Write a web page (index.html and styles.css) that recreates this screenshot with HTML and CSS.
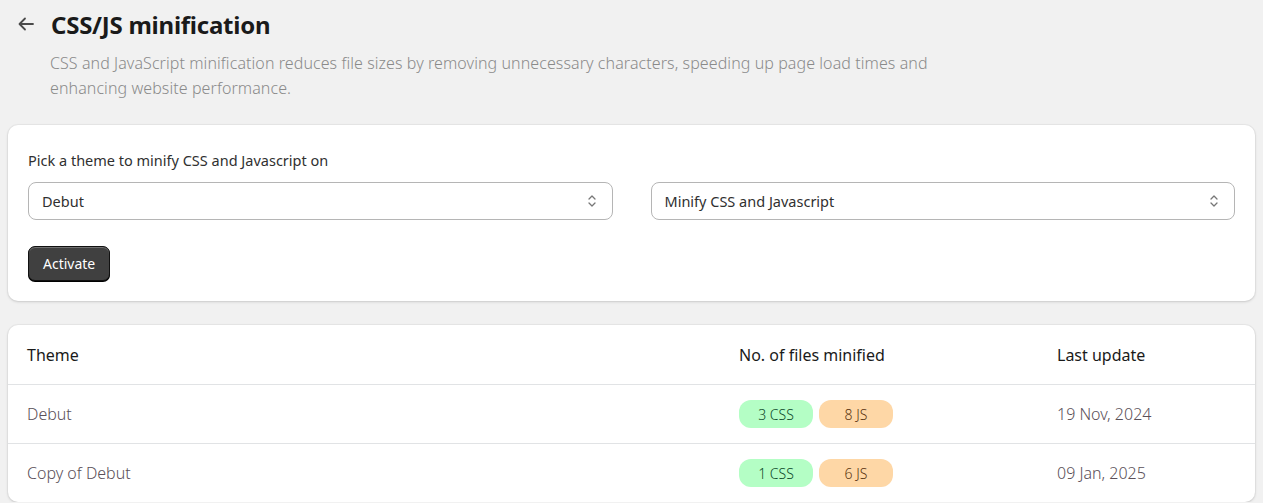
FILE: index.html
```html
<!DOCTYPE html>
<html lang="en">
<head>
<meta charset="utf-8">
<title>CSS/JS minification</title>
<link rel="stylesheet" href="styles.css">
</head>
<body>
<div class="page">
  <header class="page-header">
    <button class="back" aria-label="Back">
      <svg width="20" height="20" viewBox="0 0 20 20"><path d="M17 10H4M9 4.5L3.5 10 9 15.5" fill="none" stroke="#4a4a4a" stroke-width="1.8" stroke-linecap="round" stroke-linejoin="round"/></svg>
    </button>
    <h1 class="title">CSS/JS minification</h1>
  </header>
  <p class="desc">CSS and JavaScript minification reduces file sizes by removing unnecessary characters, speeding up page load times and enhancing website performance.</p>

  <section class="card form-card">
    <label class="field-label">Pick a theme to minify CSS and Javascript on</label>
    <div class="selects">
      <div class="select"><span>Debut</span><svg class="chev" width="12" height="16" viewBox="0 0 12 16"><path d="M3 6l3-3 3 3M3 10l3 3 3-3" fill="none" stroke="#777" stroke-width="1.3" stroke-linecap="round" stroke-linejoin="round"/></svg></div>
      <div class="select"><span>Minify CSS and Javascript</span><svg class="chev" width="12" height="16" viewBox="0 0 12 16"><path d="M3 6l3-3 3 3M3 10l3 3 3-3" fill="none" stroke="#777" stroke-width="1.3" stroke-linecap="round" stroke-linejoin="round"/></svg></div>
    </div>
    <button class="btn-primary">Activate</button>
  </section>

  <section class="card table-card">
    <div class="row head">
      <div class="c1">Theme</div>
      <div class="c2">No. of files minified</div>
      <div class="c3">Last update</div>
    </div>
    <div class="row">
      <div class="c1 name">Debut</div>
      <div class="c2 badges"><span class="badge css">3 CSS</span><span class="badge js">8 JS</span></div>
      <div class="c3 date">19 Nov, 2024</div>
    </div>
    <div class="row">
      <div class="c1 name">Copy of Debut</div>
      <div class="c2 badges"><span class="badge css">1 CSS</span><span class="badge js">6 JS</span></div>
      <div class="c3 date">09 Jan, 2025</div>
    </div>
  </section>
</div>
</body>
</html>
```
FILE: styles.css
```css
* { box-sizing: border-box; }
html, body { margin: 0; padding: 0; }
body {
  background: #f1f1f1;
  font-family: "Noto Sans", "Open Sans", sans-serif;
  color: #303030;
}
.page { padding: 8px 8px 0; }
.page-header {
  display: flex;
  align-items: center;
  gap: 14px;
  height: 32px;
}
.back {
  width: 22px; height: 22px;
  margin-left: 7px;
  padding: 0; border: 0; background: none;
  display: flex; align-items: center; justify-content: center;
}
.title {
  margin: 0;
  font-size: 24px;
  font-weight: 700;
  color: #1a1a1a;
  letter-spacing: -0.25px;
}
.desc {
  margin: 11px 0 0 42px;
  max-width: 900px;
  font-size: 16px;
  line-height: 25px;
  font-weight: 300;
  color: #8a8a8a;
  letter-spacing: 0.08px;
}
.card {
  background: #fff;
  border-radius: 10px;
  box-shadow: 0 1px 3px rgba(0,0,0,0.14), 0 0 0 1px rgba(0,0,0,0.03);
}
.form-card {
  margin-top: 24px;
  padding: 25px 20px 20px;
}
.field-label {
  display: block;
  font-size: 14.5px;
  line-height: 20px;
  color: #303030;
}
.selects {
  display: grid;
  grid-template-columns: 1fr 1fr;
  gap: 38px;
  margin-top: 12px;
}
.select {
  height: 38px;
  border: 1px solid #b5b5b5;
  border-radius: 8px;
  display: flex;
  align-items: center;
  justify-content: space-between;
  padding: 0 14px 0 13px;
  font-size: 14.5px;
  color: #303030;
}
.btn-primary {
  margin-top: 26px;
  height: 35px;
  padding: 0 14px;
  background: #404040;
  color: #fff;
  border: 1px solid #111;
  border-radius: 7px;
  box-shadow: inset 0 1px 0 rgba(255,255,255,0.25), 0 1px 0 #000;
  font-family: inherit;
  font-size: 14px;
}
.table-card {
  margin-top: 24px;
}
.row {
  display: grid;
  grid-template-columns: 712px 318px 1fr;
  align-items: center;
  height: 59px;
  padding-left: 19px;
  border-top: 1px solid #e1e3e5;
  font-size: 16px;
}
.row.head { border-top: 0; height: 59px; color: #1a1a1a; }
.name, .date { font-weight: 300; color: #5a4f58; }
.badges { display: flex; gap: 6px; }
.badge {
  width: 74px;
  height: 28px;
  border-radius: 12px;
  display: flex; align-items: center; justify-content: center;
  font-size: 14px;
  font-weight: 300;
}
.badge.css { background: #b4fec5; color: #0d4a2a; }
.badge.js { background: #fed7a6; color: #5a3410; }
```
